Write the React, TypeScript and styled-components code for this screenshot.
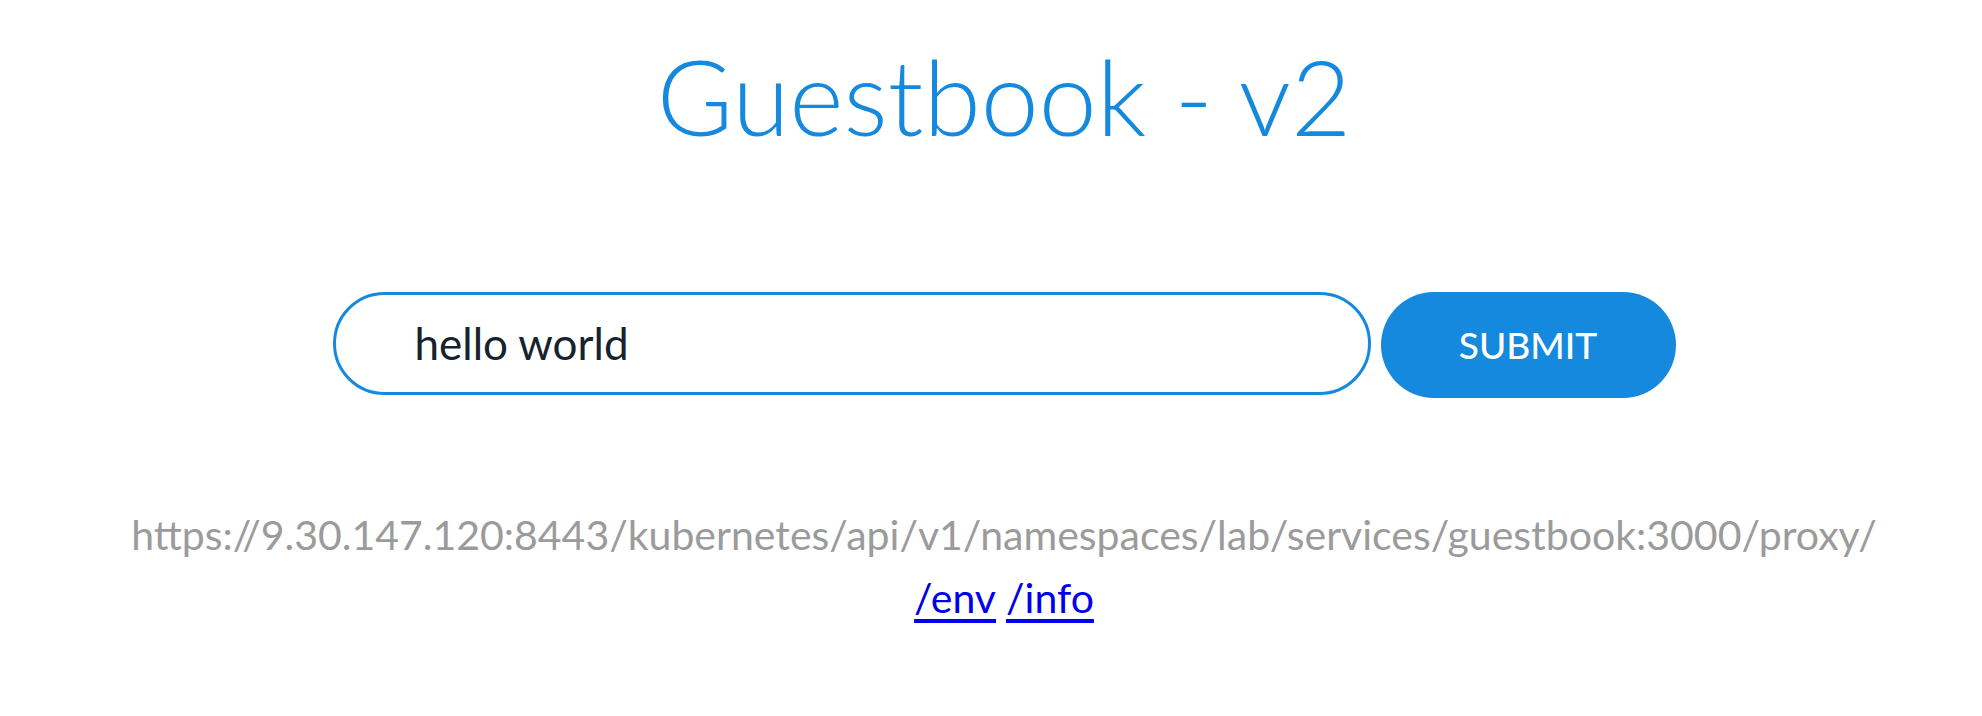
import React from 'react'
import styled, { createGlobalStyle } from 'styled-components'

const GlobalStyle = createGlobalStyle`
  html, body {
    margin: 0;
    padding: 0;
    background: #ffffff;
  }
  body {
    font-family: 'Lato', 'Open Sans', sans-serif;
  }
`

const Page = styled.div`
  display: flex;
  flex-direction: column;
  align-items: center;
  padding-left: 26px;
  min-height: 716px;
  box-sizing: border-box;
`

const Title = styled.h1`
  margin: 34px 0 0;
  font-family: 'Lato', sans-serif;
  font-weight: 300;
  font-size: 104px;
  line-height: 1.2;
  color: #1589dd;
`

const EntryForm = styled.form`
  display: flex;
  align-items: flex-start;
  gap: 10px;
  margin-top: 133px;
`

const EntryInput = styled.input`
  box-sizing: border-box;
  width: 1038px;
  height: 103px;
  border: 3px solid #1589dd;
  border-radius: 52px;
  padding: 0 40px 0 79px;
  font-family: 'Lato', sans-serif;
  font-size: 44px;
  color: #17222f;
  background: #ffffff;
  outline: none;
`

const SubmitButton = styled.button`
  box-sizing: border-box;
  width: 295px;
  height: 106px;
  border: none;
  border-radius: 53px;
  background: #1589dd;
  color: #ffffff;
  font-family: 'Lato', sans-serif;
  font-size: 37px;
  font-weight: 500;
  cursor: pointer;
`

const Footer = styled.div`
  margin-top: 105px;
  text-align: center;
  font-family: 'Lato', sans-serif;
  font-size: 41px;
  line-height: 63px;
`

const ProxyUrl = styled.div`
  color: #9b9b9b;
`

const LinkRow = styled.div`
  display: flex;
  justify-content: center;
  gap: 10px;
`

const PageLink = styled.a`
  color: #0000ee;
  text-decoration: underline;
  text-underline-offset: 6px;
`

export default function App() {
  return (
    <>
      <GlobalStyle />
      <Page>
        <Title>Guestbook - v2</Title>
        <EntryForm onSubmit={(e) => e.preventDefault()}>
          <EntryInput defaultValue="hello world" />
          <SubmitButton type="submit">SUBMIT</SubmitButton>
        </EntryForm>
        <Footer>
          <ProxyUrl>
            https://9.30.147.120:8443/kubernetes/api/v1/namespaces/lab/services/guestbook:3000/proxy/
          </ProxyUrl>
          <LinkRow>
            <PageLink href="#env">/env</PageLink>
            <PageLink href="#info">/info</PageLink>
          </LinkRow>
        </Footer>
      </Page>
    </>
  )
}
